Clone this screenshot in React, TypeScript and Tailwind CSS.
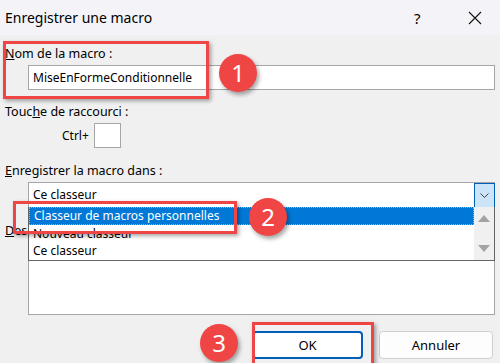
import React from "react";

const font = { fontFamily: '"Noto Sans", "Open Sans", sans-serif' };

function Badge({ n, className }: { n: string; className: string }) {
  return (
    <div
      className={
        "absolute w-[38px] h-[38px] rounded-full bg-[#f04545] text-white flex items-center justify-center text-[24px] leading-none shadow-[2px_3px_4px_rgba(0,0,0,0.35)] " +
        className
      }
    >
      {n}
    </div>
  );
}

export default function App() {
  return (
    <div
      className="relative w-[500px] h-[363px] overflow-hidden bg-[#f0f0f0] text-black text-[12px] leading-[16px]"
      style={font}
    >
      {/* Title bar */}
      <div className="h-[35px] bg-[#f3f3f8] flex items-center pl-[5px]">
        <div className="text-[14px] leading-[20px] flex-1">Enregistrer une macro</div>
        <div className="text-[15px] w-[10px] mr-[44px]">?</div>
        <svg width="14" height="14" viewBox="0 0 14 14" className="mr-[18px]">
          <path d="M1 1 L13 13 M13 1 L1 13" stroke="#111" strokeWidth="1.1" />
        </svg>
      </div>

      {/* Body */}
      <div className="pl-[5px] pr-[5px]">
        <div className="mt-[11px] text-[12.5px]">
          <span className="underline">N</span>om de la macro :
        </div>
        <div className="mt-[3px] ml-[23px] h-[25px] bg-white border border-[#a6a6a6] flex items-center pl-[4px]">
          MiseEnFormeConditionnelle
        </div>

        <div className="mt-[14px] text-[12.5px]">
          Touc<span className="underline">h</span>e de raccourci :
        </div>
        <div className="mt-[3px] flex items-center">
          <span className="ml-[57px] mr-[5px]">Ctrl+</span>
          <div className="w-[27px] h-[25px] bg-white border border-[#a6a6a6]"></div>
        </div>

        <div className="mt-[15px] text-[12.5px]">
          <span className="underline">E</span>nregistrer la macro dans :
        </div>
        <div className="mt-[3px] ml-[23px] h-[26px] bg-white border border-[#a6a6a6] flex items-center">
          <span className="pl-[4px] flex-1">Ce classeur</span>
          <div className="w-[21px] h-[25px] bg-[#cce4f7] border border-[#005fb8] flex items-center justify-center -mr-px">
            <svg width="9" height="5" viewBox="0 0 9 5">
              <path d="M0.5 0.5 L4.5 4.5 L8.5 0.5" stroke="#444" fill="none" strokeWidth="1" />
            </svg>
          </div>
        </div>

        <div className="mt-[15px] text-[12.5px]">
          <span className="underline">D</span>escription :
        </div>
        <div className="mt-[2px] ml-[23px] h-[74px] bg-white border border-[#a6a6a6]"></div>

        <div className="mt-[16px] flex justify-end gap-[16px] pr-[2px]">
          <div className="w-[111px] h-[28px] bg-white border-2 border-[#005fb8] rounded-[4px] flex items-center justify-center text-[13px]">
            OK
          </div>
          <div className="w-[114px] h-[28px] bg-[#fdfdfd] border border-[#cfcfcf] rounded-[4px] flex items-center justify-center text-[13px]">
            Annuler
          </div>
        </div>
      </div>

      {/* Dropdown list overlay */}
      <div className="absolute left-[28px] top-[207px] w-[467px] h-[54px] bg-white border border-t-0 border-[#646464] flex">
        <div className="flex-1 flex flex-col">
          <div className="h-[18px] bg-[#0078d7] text-white flex items-center pl-[4px] border border-dotted border-[#f0a040]">
            Classeur de macros personnelles
          </div>
          <div className="h-[17px] flex items-center pl-[4px]">Nouveau classeur</div>
          <div className="h-[17px] flex items-center pl-[4px]">Ce classeur</div>
        </div>
        <div className="w-[20px] bg-[#f0f0f0] flex flex-col items-center justify-between py-[8px]">
          <svg width="12" height="7" viewBox="0 0 12 7">
            <path d="M6 0 L12 7 L0 7 Z" fill="#a3a3a3" />
          </svg>
          <svg width="12" height="7" viewBox="0 0 12 7">
            <path d="M0 0 L12 0 L6 7 Z" fill="#a3a3a3" />
          </svg>
        </div>
      </div>

      {/* Red highlight boxes */}
      <div className="absolute left-[3px] top-[41px] w-[206px] h-[58px] border-[3px] border-[#f04545] shadow-[2px_2px_4px_rgba(0,0,0,0.35)]"></div>
      <div className="absolute left-[13px] top-[201px] w-[224px] h-[33px] border-[3px] border-[#f04545] shadow-[2px_2px_4px_rgba(0,0,0,0.35)]"></div>
      <div className="absolute left-[252px] top-[322px] w-[122px] h-[45px] border-[3px] border-[#f04545] shadow-[2px_2px_4px_rgba(0,0,0,0.35)]"></div>

      <Badge n="1" className="left-[219px] top-[54px]" />
      <Badge n="2" className="left-[249px] top-[198px]" />
      <Badge n="3" className="left-[200px] top-[324px]" />
    </div>
  );
}
